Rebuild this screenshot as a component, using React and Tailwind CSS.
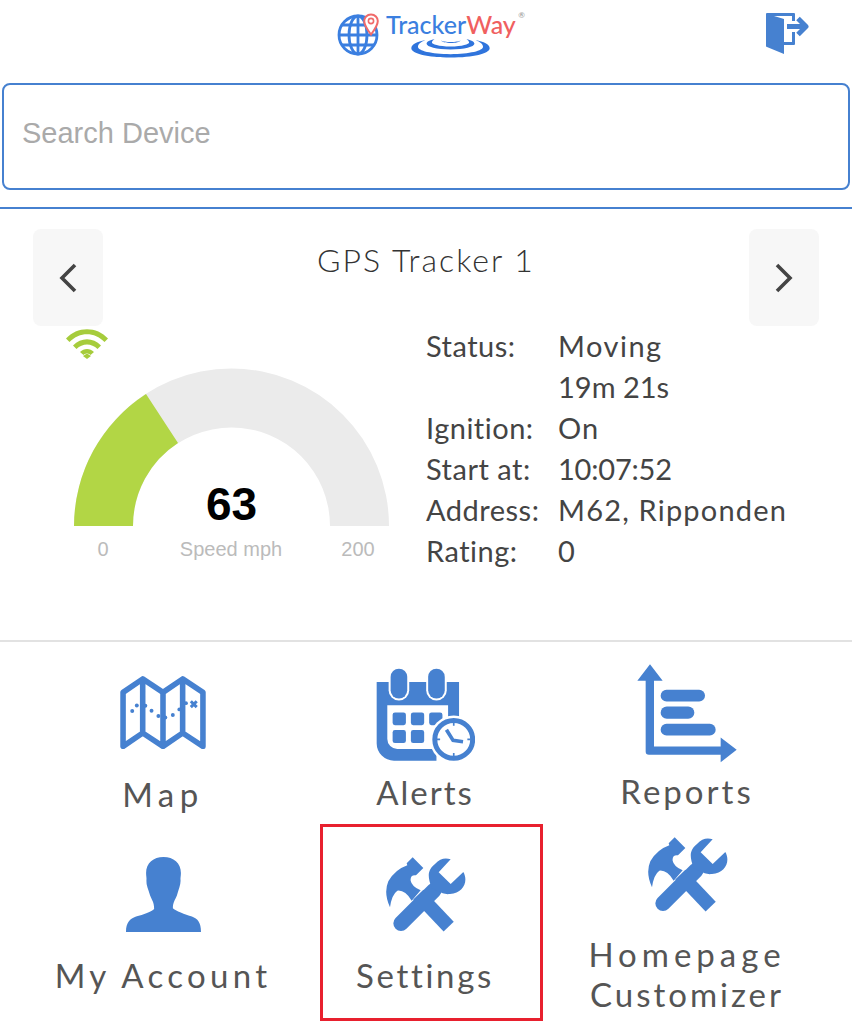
import React from 'react';

const BLUE = '#4681d0';

function Logo() {
  return (
    <div className="flex items-start">
      <svg width="44" height="43" viewBox="0 0 44 43" className="shrink-0">
        <g fill="none" stroke="#3b7fe0" strokeWidth="2.8">
          <circle cx="21" cy="22" r="19" />
          <ellipse cx="21" cy="22" rx="9" ry="19" />
          <path d="M21 3v38M2.500 22h37M5 12h32M5 32h32" />
        </g>
        <path d="M34 1.500c-4 0-6.800 3-6.800 6.500 0 4.500 6.800 13.500 6.800 13.500s6.800-9 6.800-13.500c0-3.500-2.800-6.500-6.800-6.500z" fill="#fff" stroke="#f06a6a" strokeWidth="2" />
        <circle cx="34" cy="8" r="2.600" fill="none" stroke="#f06a6a" strokeWidth="1.600" />
      </svg>
      <div className="ml-[5px] flex flex-col items-center">
        <div className="relative mt-[-4px] flex text-[25px] leading-[30px] font-medium font-['Lato',sans-serif]">
          <span className="text-[#3b7fe0]">Tracker</span>
          <span className="text-[#f0605f]">Way</span>
          <span className="absolute right-[-9px] top-[1px] text-[8px] leading-[10px] text-[#999]">®</span>
        </div>
        <svg width="83" height="22" viewBox="265 112 250 65" fill="#2f74dc" className="mt-[-2px]">
          <path d="M272 145c0-12 18-20 42-24-14 5-22 12-22 20 0 12 40 22 98 22s98-10 98-22c0-8-8-15-22-20 24 4 42 12 42 24 0 16-50 28-118 28s-118-12-118-28z" />
          <path d="M318 132c0-7 10-12 24-14-5 3-8 6-8 10 0 5 20 12 56 12s56-7 56-12c0-4-3-7-8-10 14 2 24 7 24 14 0 9-30 17-72 17s-72-8-72-17z" />
          <path d="M362 122c6 6 52 6 58 0-2 10-56 10-58 0z" />
        </svg>
      </div>
    </div>
  );
}

function ExitIcon() {
  return (
    <svg width="43" height="42" viewBox="0 0 43 42" fill={BLUE}>
      <path d="M0 1a1 1 0 0 1 1-1h27a1 1 0 0 1 1 1v7h-3V3H8l10 3v23h8V19h3v12a1 1 0 0 1-1 1H18v9L1 34a1 1 0 0 1-1-1z" />
      <path d="M21 13.500H38M32 5.500l8 8-8 8" fill="none" stroke={BLUE} strokeWidth="5" strokeLinejoin="round" />
    </svg>
  );
}

function Chevron({ left }) {
  return (
    <svg width="18" height="30" viewBox="0 0 18 30" fill="none" stroke="#444" strokeWidth="3.600">
      <path d={left ? 'M16 2L3 15l13 13' : 'M2 2l13 13L2 28'} />
    </svg>
  );
}

function Wifi() {
  return (
    <svg width="42" height="30" viewBox="0 0 42 30" fill="#a6cc3c">
      <path d="M0 9.500C11-3 31-3 42 9.500l-3.500 3.500C28.500 2.500 13.500 2.500 3.500 13z" />
      <path d="M7 16.500c8-8.500 20-8.500 28 0l-3.500 3.500c-6-6-15-6-21 0z" />
      <path d="M14 23c4-4 10-4 14 0l-3.500 3c-2-2-5-2-7 0z" />
      <path d="M21 24.500l4 2.500-4 3-4-3z" />
    </svg>
  );
}

function Gauge() {
  return (
    <svg width="316" height="158" viewBox="0 0 316 158" className="block">
      <path d="M0 158A157.500 157.500 0 0 1 315 158H256A98.500 98.500 0 0 0 59 158z" fill="#ebebeb" />
      <path d="M0 158A157.500 157.500 0 0 1 72 26L104 75A98.500 98.500 0 0 0 59 158z" fill="#b2d645" />
    </svg>
  );
}

function MapIcon() {
  return (
    <svg width="88" height="74" viewBox="60 45 260 226">
      <path d="M68 98L128 57l62 41 60-41 62 41v165l-62-41-60 41-62-41-60 41zM128 57v165M190 98v165M250 57v165" fill="none" stroke={BLUE} strokeWidth="17" strokeLinejoin="round" />
      <g fill={BLUE}>
        <circle cx="96" cy="155" r="6" />
        <circle cx="110" cy="138" r="6" />
        <circle cx="136" cy="139" r="6" />
        <circle cx="155" cy="154" r="6" />
        <circle cx="176" cy="170" r="6" />
        <circle cx="197" cy="175" r="6" />
        <circle cx="220" cy="167" r="6" />
        <circle cx="240" cy="150" r="6" />
        <circle cx="260" cy="131" r="6" />
      </g>
      <path d="M275 125l18 18M293 125l-18 18" stroke={BLUE} strokeWidth="9" fill="none" />
    </svg>
  );
}

function CalendarIcon() {
  return (
    <svg width="99" height="93" viewBox="828 26 298 280">
      <path d="M830 68H1078V200H1010V305H882a52 52 0 0 1-52-52z" fill={BLUE} />
      <path d="M862 138H1045V270H892a30 30 0 0 1-30-30z" fill="#fff" />
      <rect x="866" y="22" width="62" height="102" rx="31" fill="#fff" />
      <rect x="979" y="22" width="62" height="102" rx="31" fill="#fff" />
      <rect x="872" y="28" width="50" height="90" rx="25" fill={BLUE} />
      <rect x="985" y="28" width="50" height="90" rx="25" fill={BLUE} />
      <rect x="878" y="160" width="40" height="38" rx="7" fill={BLUE} />
      <rect x="933" y="160" width="40" height="38" rx="7" fill={BLUE} />
      <rect x="988" y="160" width="40" height="38" rx="7" fill={BLUE} />
      <rect x="878" y="213" width="40" height="39" rx="7" fill={BLUE} />
      <rect x="933" y="213" width="40" height="39" rx="7" fill={BLUE} />
      <circle cx="1062" cy="241" r="72" fill="#fff" />
      <circle cx="1062" cy="241" r="57" fill="#fff" stroke={BLUE} strokeWidth="15" />
      <path d="M1040 212l20 32 30 4" fill="none" stroke={BLUE} strokeWidth="11" />
      <path d="M1062 190v10M1062 282v10M1011 241h10M1103 241h10" stroke={BLUE} strokeWidth="5" />
    </svg>
  );
}

function ReportsIcon() {
  return (
    <svg width="100" height="99" viewBox="54 18 300 296" fill={BLUE}>
      <path d="M93 18l38 50H105V265H305V238l48 37-48 37V290H90a10 10 0 0 1-10-10V68H55z" />
      <rect x="125" y="95" width="133" height="35" rx="17.500" />
      <rect x="125" y="145" width="101" height="37" rx="18.500" />
      <rect x="125" y="197" width="165" height="35" rx="17.500" />
    </svg>
  );
}

function PersonIcon() {
  return (
    <svg width="75" height="75" viewBox="48 97 224 224" fill={BLUE}>
      <path d="M160 97C190 97 212 115 212 145C212 155 210 160 211 168C211 180 205 195 200 212C195 225 188 232 188 250C195 258 225 268 245 275C262 282 272 292 272 321L48 321C48 292 60 282 78 275C100 268 125 260 132 252C132 232 125 225 120 212C115 195 108 180 109 168C110 160 108 155 108 145C108 115 130 97 160 97Z" />
    </svg>
  );
}

function ToolsIcon() {
  return (
    <svg width="81" height="75" viewBox="825 97 243 225" fill={BLUE}>
      <path d="M908 98L940 130L918 152Q900 150 902 168Q905 185 932 197L905 228Q885 195 862 198Q845 210 840 248Q820 205 835 170Q855 135 892 122L890 116Z" />
      <path d="M925 210L1016 306" stroke={BLUE} strokeWidth="42" />
      <path d="M873 296L972 197" stroke={BLUE} strokeWidth="46" strokeLinecap="round" />
      <path d="M1022 104L986 143L1022 178L1060 142C1076 170 1060 205 1020 208C1005 210 995 205 985 200L965 190C950 150 955 135 975 118C990 102 1005 98 1022 104Z" />
    </svg>
  );
}

function NavItem({ icon, className, children }) {
  return (
    <div className={`flex flex-col items-center text-center ${className}`}>
      {icon}
      {children}
    </div>
  );
}

const labelClass = "text-[33px] leading-[40px] text-[#555] font-['Lato',sans-serif] whitespace-nowrap";

export default function App() {
  const details = [
    ['Status:', 'Moving', 'tracking-[1.5px]'],
    ['', '19m 21s', 'tracking-[0px]'],
    ['Ignition:', 'On', 'tracking-[1px]'],
    ['Start at:', '10:07:52', 'tracking-[-0.2px]'],
    ['Address:', 'M62, Ripponden', 'tracking-[1.2px]'],
    ['Rating:', '0', 'tracking-[1px]'],
  ];

  return (
    <div className="relative h-[1030px] w-[852px] overflow-hidden bg-white font-['Lato',sans-serif]">
      <header className="flex h-[83px] items-start pl-[337px] pr-[43px] pt-[13px]">
        <Logo />
        <div className="ml-auto">
          <ExitIcon />
        </div>
      </header>

      <div className="mx-[2px]">
        <input
          placeholder="Search Device"
          className="h-[107px] w-full rounded-lg border-2 border-[#4681d0] px-[18px] pb-[6px] text-[29px] font-['Liberation_Sans',sans-serif] outline-none placeholder:text-[#aaa]"
        />
      </div>
      <div className="mt-[17px] h-[2px] bg-[#4681d0]" />

      <section className="h-[433px] border-b-2 border-[#e2e2e2] pt-[20px]">
        <div className="flex items-start justify-between px-[33px]">
          <button className="flex h-[97px] w-[70px] items-center justify-center rounded-lg bg-[#f7f7f7]">
            <Chevron left />
          </button>
          <h2 className="mt-[11px] text-[32px] leading-[40px] font-light tracking-[2px] text-[#333]">GPS Tracker 1</h2>
          <button className="flex h-[97px] w-[70px] items-center justify-center rounded-lg bg-[#f7f7f7]">
            <Chevron />
          </button>
        </div>
        <div className="flex">
          <div className="ml-[74px] w-[352px]">
            <div className="mt-[3px] ml-[-8px]">
              <Wifi />
            </div>
            <div className="relative mt-[9px] w-[315px]">
              <Gauge />
              <span className="absolute bottom-[-3px] left-0 w-full text-center text-[46px] leading-[50px] font-bold text-black font-['Liberation_Sans',sans-serif]">63</span>
            </div>
            <div className="mt-[12px] grid grid-cols-[58px_198px_56px] text-center text-[20px] leading-[22px] text-[#bbb] font-['Liberation_Sans',sans-serif]">
              <span>0</span>
              <span>Speed mph</span>
              <span>200</span>
            </div>
          </div>
          <div className="mt-[-1px] grid grid-cols-[132px_auto] content-start text-[29px] leading-[41px] text-[#444]">
            {details.map(([label, value, spacing]) => (
              <React.Fragment key={value}>
                <span className="tracking-[0.5px]">{label}</span>
                <span className={`whitespace-nowrap ${spacing}`}>{value}</span>
              </React.Fragment>
            ))}
          </div>
        </div>
      </section>

      <nav className="grid grid-cols-[262px_262px_262px] pl-[32px]">
        <NavItem icon={<MapIcon />} className="h-[182px] pt-[33px]">
          <span className={`mt-[25px] tracking-[5.5px] ${labelClass}`}>Map</span>
        </NavItem>
        <NavItem icon={<CalendarIcon />} className="h-[182px] pt-[26px]">
          <span className={`mt-[11px] tracking-[2px] ${labelClass}`}>Alerts</span>
        </NavItem>
        <NavItem icon={<ReportsIcon />} className="h-[182px] pt-[22px]">
          <span className={`mt-[8px] tracking-[3px] ${labelClass}`}>Reports</span>
        </NavItem>
        <NavItem icon={<PersonIcon />} className="pt-[33px]">
          <span className={`mt-[23px] tracking-[4.3px] ${labelClass}`}>My Account</span>
        </NavItem>
        <NavItem icon={<ToolsIcon />} className="pt-[33px]">
          <span className={`mt-[23px] tracking-[2.7px] ${labelClass}`}>Settings</span>
        </NavItem>
        <NavItem icon={<ToolsIcon />} className="pt-[13px]">
          <span className={`mt-[22px] tracking-[3px] ${labelClass}`}>
            <span className="tracking-[5px]">Homepage</span>
            <br />
            Customizer
          </span>
        </NavItem>
      </nav>

      {/* red highlight drawn over the settings tile */}
      <div className="absolute left-[320px] top-[824px] h-[197px] w-[223px] border-[3px] border-[#e8202e]" />
    </div>
  );
}
